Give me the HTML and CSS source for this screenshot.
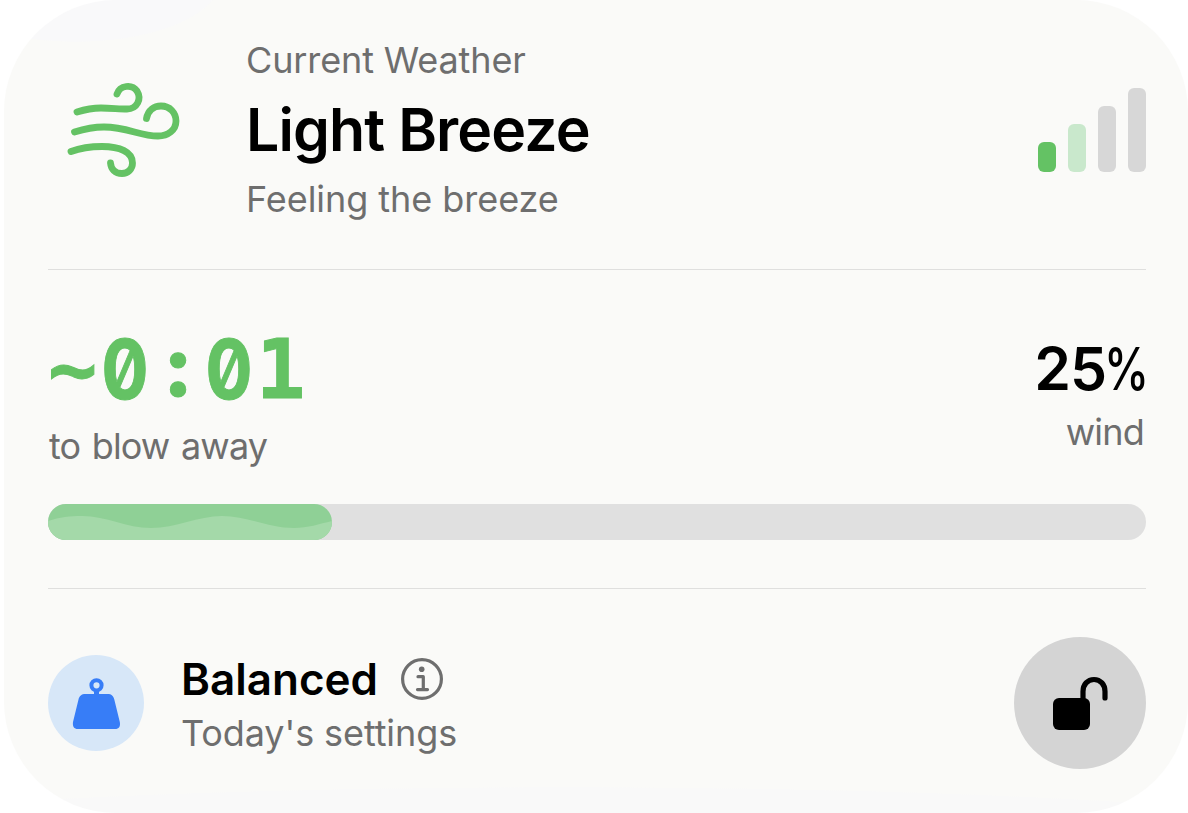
FILE: index.html
```html
<!DOCTYPE html>
<html lang="en">
<head>
    <meta charset="UTF-8">
    <title>Current Weather</title>
    <link rel="stylesheet" href="styles.css">
</head>
<body>
    <div class="card">
        <div class="weather">
            <svg class="wind-icon" width="120" height="104" viewBox="64 78 120 104">
                <path d="M117 94C120 85 132 84 137 91C142 99 137 109 127 109C119 109 111 108 101 108C93 108 85 109.500 77 112"/>
                <path d="M146.500 118.500C148 110 154 106 161 106C170 106 176 113 176 121C176 130 168 136 158 136C140 136 127 127 104 127C93 127 84 129 74.500 132"/>
                <path d="M71 151.500C79 148.500 91 146.500 102 146.500C120 146.500 132.500 152 132.500 163C132.500 169 128 173.500 122 173.500C115 173.500 111 169 110.500 163"/>
            </svg>
            <div class="weather-text">
                <div class="label current">Current Weather</div>
                <h1>Light Breeze</h1>
                <div class="label">Feeling the breeze</div>
            </div>
            <div class="bars">
                <div class="bar bar-1"></div>
                <div class="bar bar-2"></div>
                <div class="bar bar-3"></div>
                <div class="bar bar-4"></div>
            </div>
        </div>

        <div class="stats">
            <div class="stats-row">
                <div>
                    <div class="timer">~<span class="zero">0</span><span class="colon">:</span><span class="zero">0</span>1</div>
                    <div class="label blow">to blow away</div>
                </div>
                <div class="wind">
                    <div class="percent">25<span class="sign">%</span></div>
                    <div class="label wind-label">wind</div>
                </div>
            </div>
            <div class="progress">
                <div class="progress-fill">
                    <svg width="284" height="36" viewBox="0 0 284 36">
                        <path d="M0 17C12 13 22 12 34 12C59 12 78 24 103 24C128 24 150 12 174 12C199 12 221 24 246 24C260 24 271 20 284 17V36H0Z"/>
                    </svg>
                </div>
            </div>
        </div>

        <div class="settings">
            <div class="mode-icon">
                <svg width="96" height="96" viewBox="0 0 96 96">
                    <circle cx="48.500" cy="30.300" r="5.100"/>
                    <path class="stem" d="M48.500 36V42"/>
                    <path class="weight" d="M37.500 39H59.500C63.500 39 65.500 41 66.300 44.500L71.800 67C72.600 71.500 71 74 67 74H30C26 74 24.400 71.500 25 67L30.500 44.500C31.300 41 33.500 39 37.500 39Z"/>
                </svg>
            </div>
            <div class="mode-text">
                <div class="mode-name">
                    <span>Balanced</span>
                    <svg width="42" height="42" viewBox="0 0 42 42">
                        <circle class="ring" cx="21" cy="21" r="19.400"/>
                        <circle class="dot" cx="20.700" cy="11.300" r="2.800"/>
                        <path d="M17 18.700H22.300V31.600M16.500 31.600H26.500"/>
                    </svg>
                </div>
                <div class="label today">Today's settings</div>
            </div>
            <button class="lock-btn">
                <svg width="132" height="132" viewBox="0 0 132 132">
                    <rect x="39" y="61" width="37" height="32" rx="6"/>
                    <path d="M69 64V54.500C69 47.500 73.500 42.500 80 42.500C86.500 42.500 91 47.500 91 54.500V61"/>
                </svg>
            </button>
        </div>
    </div>
</body>
</html>
```

FILE: styles.css
```css
* {
    box-sizing: border-box;
}
body {
    margin: 0;
    background: #fff;
    font-family: 'Inter', sans-serif;
    color: #000;
    overflow: hidden;
}
.card {
    margin-left: 4px;
    height: 813px;
    padding: 0 42px 0 44px;
    border-radius: 112px;
    background:
        radial-gradient(ellipse 145px 62px at 72px -20px, #f9f9fa 99%, transparent 100%),
        radial-gradient(ellipse 850px 60px at 560px 847px, #f9f9f9 99%, transparent 100%),
        #fafaf8;
}
.label {
    font-size: 36px;
    line-height: 48px;
    letter-spacing: -0.05px;
    color: #6e6e6e;
    white-space: nowrap;
}
.current {
    letter-spacing: -0.13px;
}
.weather {
    display: flex;
    height: 270px;
    padding-top: 36px;
    border-bottom: 1px solid #dfdfde;
}
.wind-icon {
    margin: 42px 62px 0 16px;
    fill: none;
    stroke: #64c264;
    stroke-width: 6.8;
    stroke-linecap: round;
    stroke-linejoin: round;
}
.weather-text {
    flex: 1;
}
h1 {
    margin: 0;
    font-size: 59px;
    font-weight: 600;
    line-height: 91px;
    letter-spacing: -0.9px;
    white-space: nowrap;
}
.bars {
    display: flex;
    align-items: flex-end;
    gap: 12px;
    height: 136px;
}
.bar {
    width: 18px;
    border-radius: 6px;
    background: #d7d7d7;
}
.bar-1 {
    height: 30px;
    background: #64c264;
}
.bar-2 {
    height: 48px;
    background: #c9e8cc;
}
.bar-3 {
    height: 66px;
}
.bar-4 {
    height: 84px;
}
.stats {
    height: 319px;
    padding-top: 47px;
    border-bottom: 1px solid #dfdfde;
}
.stats-row {
    display: flex;
    justify-content: space-between;
    height: 187px;
}
.timer {
    display: flex;
    height: 105px;
    font-family: 'DejaVu Sans Mono', monospace;
    font-size: 82px;
    font-weight: bold;
    line-height: 105px;
    letter-spacing: 2.6px;
    color: #64c264;
    -webkit-text-stroke: 1px #64c264;
}
.zero, .colon {
    display: flex;
    justify-content: center;
    width: 52px;
    font-family: 'Inter', sans-serif;
    font-feature-settings: "zero";
    letter-spacing: 0;
    line-height: 105px;
}
.zero {
    margin: 0 1px 0 -1px;
    transform: scaleX(0.85);
}
.colon {
    font-size: 84px;
    font-weight: 800;
    line-height: 98px;
}
.blow {
    padding-left: 1px;
    letter-spacing: -0.9px;
    word-spacing: 2.4px;
}
.wind {
    padding-top: 12px;
    text-align: right;
}
.percent {
    display: flex;
    justify-content: flex-end;
    height: 79px;
    font-size: 59px;
    font-weight: 600;
    line-height: 80px;
    letter-spacing: -1px;
}
.sign {
    width: 42px;
    margin-left: -2px;
    font-weight: 500;
    letter-spacing: 0;
    transform: scaleX(0.77);
    transform-origin: left;
}
.wind-label {
    padding-right: 2px;
    letter-spacing: -0.8px;
}
.progress {
    height: 36px;
    border-radius: 18px;
    background: #e0e0e0;
}
.progress-fill {
    width: 284px;
    height: 36px;
    border-radius: 18px;
    background: #8fd096;
    overflow: hidden;
}
.progress-fill svg {
    display: block;
    fill: #a4d9a9;
}
.settings {
    display: flex;
    align-items: center;
    height: 228px;
}
.mode-icon {
    width: 96px;
    height: 96px;
    margin-right: 37px;
    border-radius: 50%;
    background: #d7e7f8;
}
.mode-icon svg {
    display: block;
    fill: none;
    stroke: #377df7;
    stroke-width: 4;
}
.mode-icon .stem {
    stroke-width: 5;
}
.mode-icon .weight {
    fill: #377df7;
    stroke: none;
}
.mode-text {
    flex: 1;
}
.mode-name {
    display: flex;
    align-items: center;
    gap: 23px;
    font-size: 44px;
    font-weight: 600;
    line-height: 60px;
}
.mode-name svg {
    fill: none;
    stroke: #6e6e6e;
    stroke-width: 3.2;
    stroke-linecap: round;
    stroke-linejoin: round;
}
.mode-name .dot {
    fill: #6e6e6e;
    stroke: none;
}
.today {
    letter-spacing: -0.1px;
}
.lock-btn {
    width: 132px;
    height: 132px;
    padding: 0;
    border: none;
    border-radius: 50%;
    background: #d4d4d4;
    cursor: pointer;
}
.lock-btn svg {
    display: block;
}
.lock-btn path {
    fill: none;
    stroke: #000;
    stroke-width: 5.2;
    stroke-linecap: round;
}
```
